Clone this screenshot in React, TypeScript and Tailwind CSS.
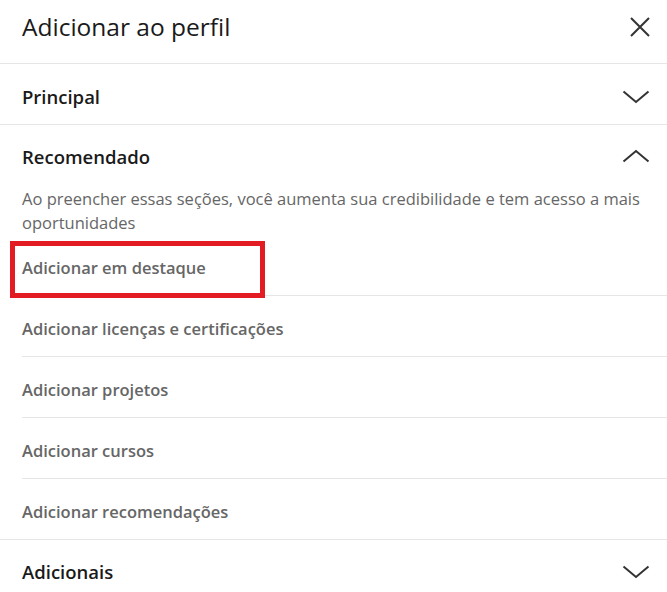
import React from 'react';

const Chevron = ({ up = false }: { up?: boolean }) => (
  <svg width="28" height="14" viewBox="0 0 28 14" fill="none" className="shrink-0">
    {up ? (
      <path d="M1.5 12.5L14 2L26.5 12.5" stroke="#333" strokeWidth="2" />
    ) : (
      <path d="M1.5 1.5L14 12L26.5 1.5" stroke="#333" strokeWidth="2" />
    )}
  </svg>
);

const items = [
  'Adicionar em destaque',
  'Adicionar licenças e certificações',
  'Adicionar projetos',
  'Adicionar cursos',
  'Adicionar recomendações',
];

const App = () => {
  return (
    <div className="w-[667px] h-[592px] bg-white overflow-hidden font-['Open_Sans',sans-serif]">
      <div className="h-[64px] flex items-center justify-between pl-[22px] pr-[16px] pb-[9px] border-b border-[#e6e6e6]">
        <h1 className="text-[24.5px] text-[#1a1a1a]">Adicionar ao perfil</h1>
        <svg width="22" height="22" viewBox="0 0 22 22" fill="none">
          <path d="M2 2L20 20M20 2L2 20" stroke="#333" strokeWidth="2" />
        </svg>
      </div>

      <div className="h-[61px] flex items-center justify-between pl-[22px] pr-[17px] pt-[6px] border-b border-[#e6e6e6]">
        <span className="text-[18.5px] font-semibold text-[#1a1a1a]">Principal</span>
        <Chevron />
      </div>

      <div className="border-b border-[#e6e6e6]">
        <div className="h-[64px] flex items-center justify-between pl-[22px] pr-[17px]">
          <span className="text-[18.5px] font-semibold text-[#1a1a1a]">Recomendado</span>
          <div className="-mt-[3px]">
            <Chevron up />
          </div>
        </div>
        <p className="px-[22px] text-[16.5px] leading-[24px] text-[#666] -mt-[2px]">
          Ao preencher essas seções, você aumenta sua credibilidade e tem acesso a mais oportunidades
        </p>
        <ul className="pl-[22px]">
          {items.map((t, i) => (
            <li
              key={t}
              className={`relative flex items-center pt-[6px] text-[16.5px] font-semibold text-[#666] ${
                i < items.length - 1 ? 'h-[61px] border-b border-[#e6e6e6]' : 'h-[60px]'
              }`}
            >
              {i === 0 && (
                <span className="absolute left-[-12px] top-[6px] w-[255px] h-[57px] border-[5px] border-[#e31b23]" />
              )}
              {t}
            </li>
          ))}
        </ul>
      </div>

      <div className="h-[64px] flex items-center justify-between pl-[22px] pr-[17px]">
        <span className="text-[18.5px] font-semibold text-[#1a1a1a]">Adicionais</span>
        <Chevron />
      </div>
    </div>
  );
};

export default App;
